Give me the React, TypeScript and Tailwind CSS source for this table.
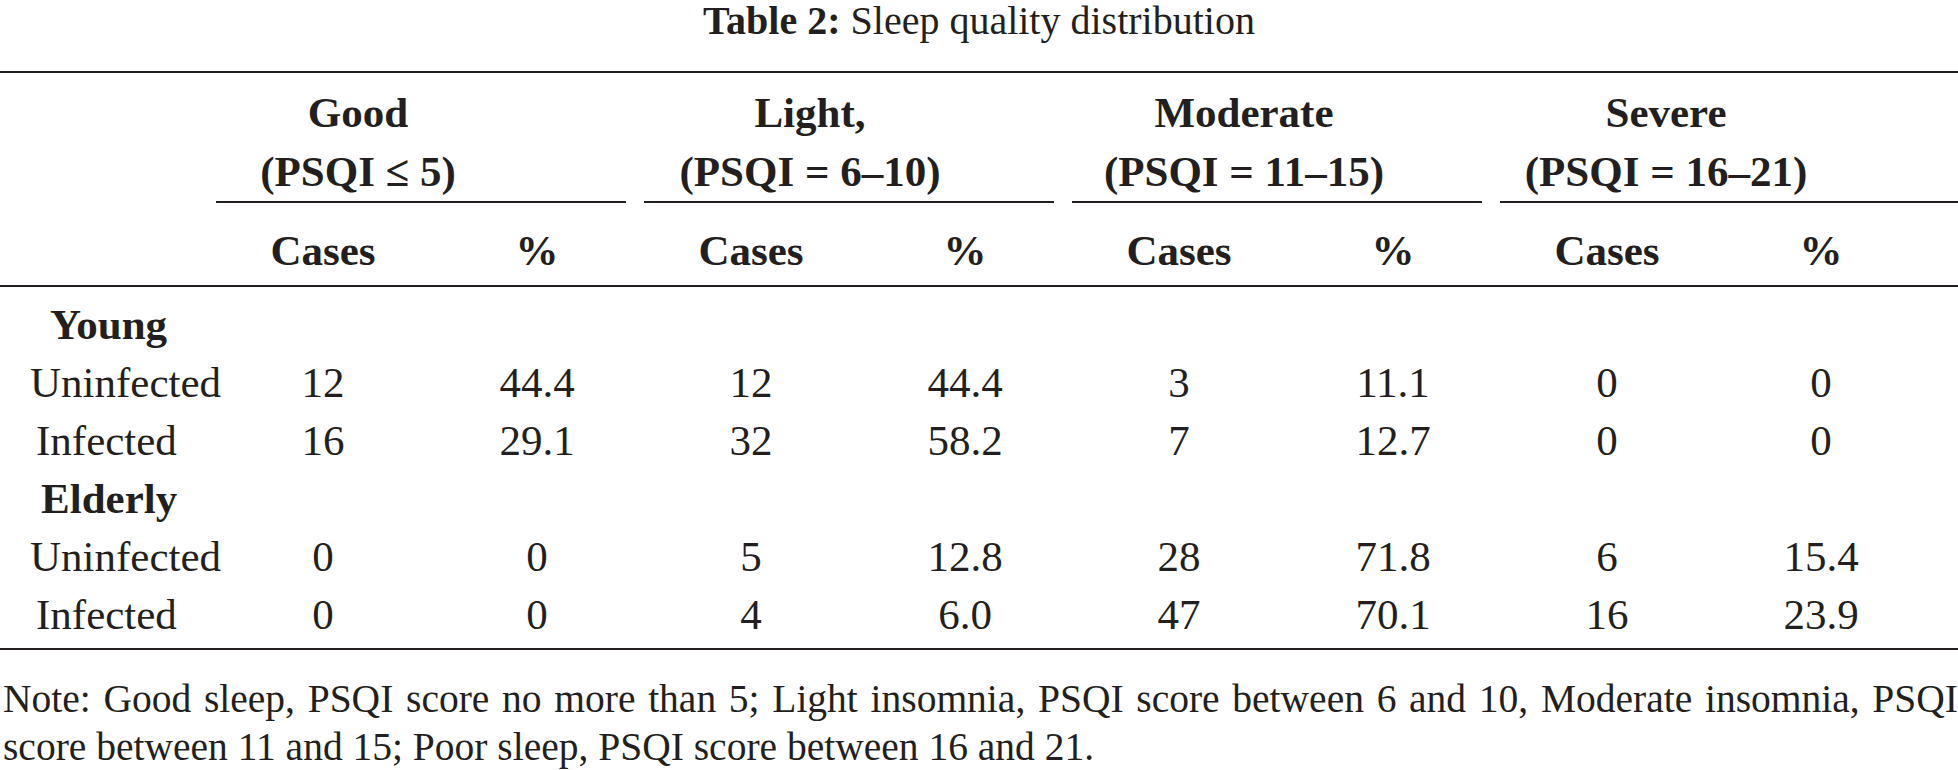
import React from "react";

type Row = { label: string; bold?: boolean; pad: string; vals?: string[] };

const rows: Row[] = [
  { label: "Young", bold: true, pad: "pl-[50px]" },
  { label: "Uninfected", pad: "pl-[30px]", vals: ["12", "44.4", "12", "44.4", "3", "11.1", "0", "0"] },
  { label: "Infected", pad: "pl-[36px]", vals: ["16", "29.1", "32", "58.2", "7", "12.7", "0", "0"] },
  { label: "Elderly", bold: true, pad: "pl-[41px]" },
  { label: "Uninfected", pad: "pl-[30px]", vals: ["0", "0", "5", "12.8", "28", "71.8", "6", "15.4"] },
  { label: "Infected", pad: "pl-[36px]", vals: ["0", "0", "4", "6.0", "47", "70.1", "16", "23.9"] },
];

const groups = [
  { name: "Good", range: "(PSQI \u2264 5)", box: "w-[284px]", grp: "w-[428px]", rule: "mr-[18px]" },
  { name: "Light,", range: "(PSQI = 6\u201310)", box: "w-[332px]", grp: "w-[428px]", rule: "mr-[18px]" },
  { name: "Moderate", range: "(PSQI = 11\u201315)", box: "w-[344px]", grp: "w-[428px]", rule: "mr-[18px]" },
  { name: "Severe", range: "(PSQI = 16\u201321)", box: "w-[332px]", grp: "flex-1", rule: "" },
];

export default function App() {
  return (
    <div className="w-[1958px] bg-white text-[#231f20] font-['Liberation_Serif',serif] text-[43px]">
      <div className="h-[42px] leading-[42px] text-center text-[40px]">
        <span className="font-bold">Table 2:</span> Sleep quality distribution
      </div>

      <div className="mt-[29px] h-[2px] bg-[#231f20]" />

      {/* group headers */}
      <div className="flex pt-[10px]">
        <div className="w-[216px] shrink-0" />
        {groups.map((g) => (
          <div key={g.name} className={`${g.grp} shrink-0 flex flex-col`}>
            <div className={`${g.box} flex flex-col items-center font-bold leading-[59px] whitespace-nowrap`}>
              <span>{g.name}</span>
              <span>{g.range}</span>
            </div>
            <div className={`h-[2px] bg-[#231f20] ${g.rule}`} />
          </div>
        ))}
      </div>

      {/* Cases / % row */}
      <div className="grid grid-cols-[216px_repeat(8,214px)_1fr] pt-[19px] pb-[5px] font-bold leading-[58px]">
        <div />
        {["Cases", "%", "Cases", "%", "Cases", "%", "Cases", "%"].map((t, i) => (
          <div key={i} className="text-center">
            {t}
          </div>
        ))}
        <div />
      </div>

      <div className="h-[2px] bg-[#231f20]" />

      {/* body */}
      <div className="pt-[9px] pb-[4px]">
        {rows.map((r, ri) => (
          <div key={ri} className="grid grid-cols-[216px_repeat(8,214px)_1fr] h-[58px] leading-[58px]">
            <div className={`${r.pad} whitespace-nowrap ${r.bold ? "font-bold" : ""}`}>{r.label}</div>
            {(r.vals ?? ["", "", "", "", "", "", "", ""]).map((v, i) => (
              <div key={i} className="text-center">
                {v}
              </div>
            ))}
            <div />
          </div>
        ))}
      </div>

      <div className="h-[2px] bg-[#231f20]" />

      {/* note */}
      <div className="mt-[25px] pl-[3px] leading-[48px] text-[39.5px]">
        <div className="whitespace-nowrap text-justify [text-align-last:justify]">
          Note: Good sleep, PSQI score no more than 5; Light insomnia, PSQI score between 6 and 10, Moderate insomnia, PSQI
        </div>
        <div className="whitespace-nowrap">score between 11 and 15; Poor sleep, PSQI score between 16 and 21.</div>
      </div>
    </div>
  );
}
